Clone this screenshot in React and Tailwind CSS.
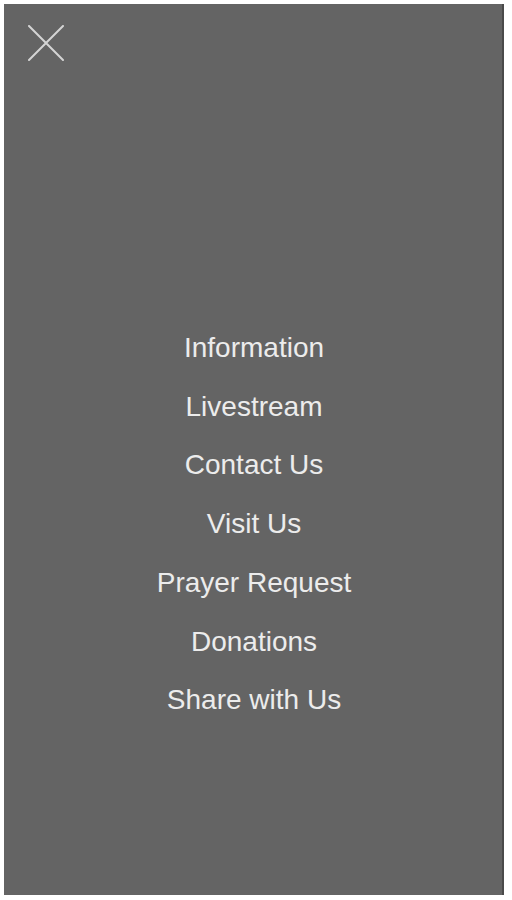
import React from "react";

const links = [
  "Information",
  "Livestream",
  "Contact Us",
  "Visit Us",
  "Prayer Request",
  "Donations",
  "Share with Us",
];

function CloseIcon() {
  return (
    <svg width="36" height="36" viewBox="0 0 36 36" fill="none">
      <path
        d="M1 1 L35 35 M35 1 L1 35"
        stroke="#d4d4d4"
        strokeWidth="2"
        strokeLinecap="round"
      />
    </svg>
  );
}

export default function App() {
  return (
    <div className="w-[512px] h-[900px] bg-white overflow-hidden">
      <div
        className="ml-[4px] mt-[4px] w-[500px] h-[891px] bg-[#646464] border-r-2 border-[#4a4a4a] flex flex-col"
        style={{ fontFamily: "'Liberation Sans', Arial, sans-serif" }}
      >
        <button className="ml-[24px] mt-[21px] w-[36px] h-[36px]" aria-label="Close menu">
          <CloseIcon />
        </button>

        <nav className="mt-[258px] pl-[2px] flex flex-col items-center">
          {links.map((label) => (
            <a
              key={label}
              href="#"
              className="text-[28px] leading-[58.7px] text-[#ececec]"
            >
              {label}
            </a>
          ))}
        </nav>
      </div>
    </div>
  );
}
